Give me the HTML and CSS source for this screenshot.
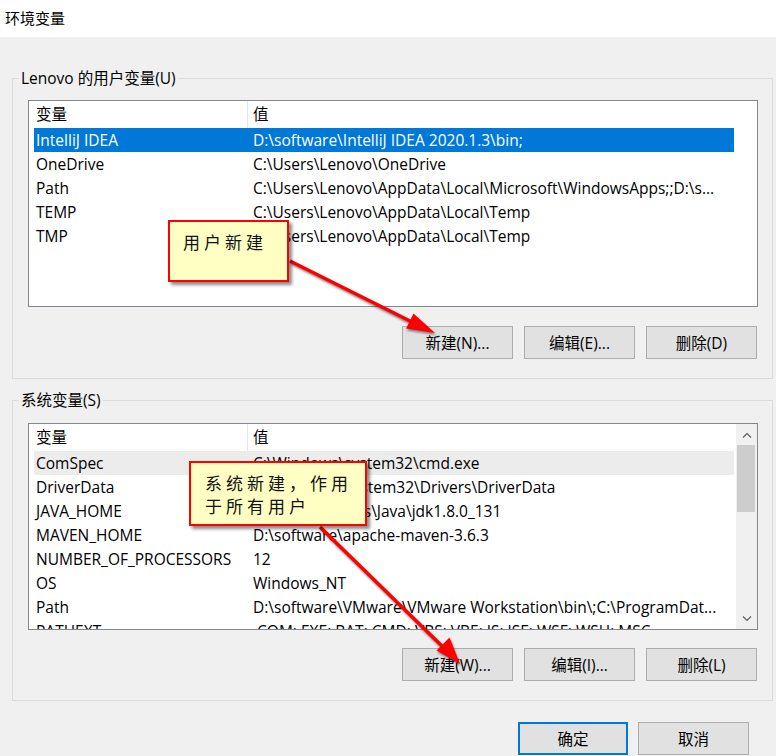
FILE: index.html
```html
<!DOCTYPE html>
<html lang="zh-CN">
<head>
<meta charset="utf-8">
<title>环境变量</title>
<link rel="stylesheet" href="styles.css">
</head>
<body>
<div class="window">
  <div class="titlebar">环境变量</div>

  <fieldset class="group group-user">
    <legend>Lenovo 的用户变量(U)</legend>
    <div class="list">
      <div class="rows">
        <div class="row head"><span class="c1">变量</span><span class="c2">值</span></div>
        <div class="row sel"><span class="c1">IntelliJ IDEA</span><span class="c2">D:\software\IntelliJ IDEA 2020.1.3\bin;</span></div>
        <div class="row"><span class="c1">OneDrive</span><span class="c2">C:\Users\Lenovo\OneDrive</span></div>
        <div class="row"><span class="c1">Path</span><span class="c2">C:\Users\Lenovo\AppData\Local\Microsoft\WindowsApps;;D:\s...</span></div>
        <div class="row"><span class="c1">TEMP</span><span class="c2">C:\Users\Lenovo\AppData\Local\Temp</span></div>
        <div class="row"><span class="c1">TMP</span><span class="c2">C:\Users\Lenovo\AppData\Local\Temp</span></div>
      </div>
    </div>
    <div class="btns">
      <button class="btn">新建(N)...</button>
      <button class="btn">编辑(E)...</button>
      <button class="btn">删除(D)</button>
    </div>
  </fieldset>

  <fieldset class="group group-sys">
    <legend>系统变量(S)</legend>
    <div class="list">
      <div class="rows">
        <div class="row head"><span class="c1">变量</span><span class="c2">值</span></div>
        <div class="row hl"><span class="c1">ComSpec</span><span class="c2">C:\Windows\system32\cmd.exe</span></div>
        <div class="row"><span class="c1">DriverData</span><span class="c2">C:\Windows\System32\Drivers\DriverData</span></div>
        <div class="row"><span class="c1">JAVA_HOME</span><span class="c2">C:\Program Files\Java\jdk1.8.0_131</span></div>
        <div class="row"><span class="c1">MAVEN_HOME</span><span class="c2">D:\software\apache-maven-3.6.3</span></div>
        <div class="row"><span class="c1">NUMBER_OF_PROCESSORS</span><span class="c2">12</span></div>
        <div class="row"><span class="c1">OS</span><span class="c2">Windows_NT</span></div>
        <div class="row"><span class="c1">Path</span><span class="c2">D:\software\VMware\VMware Workstation\bin\;C:\ProgramDat...</span></div>
        <div class="row"><span class="c1">PATHEXT</span><span class="c2">.COM;.EXE;.BAT;.CMD;.VBS;.VBE;.JS;.JSE;.WSF;.WSH;.MSC</span></div>
      </div>
      <div class="vscroll">
        <div class="sb-btn"><svg width="10" height="6" viewBox="0 0 10 6"><polyline points="1,5.5 5,1.5 9,5.5" fill="none" stroke="#606060" stroke-width="1.2"/></svg></div>
        <div class="sb-thumb"></div>
        <div class="sb-track"></div>
        <div class="sb-btn"><svg width="10" height="6" viewBox="0 0 10 6"><polyline points="1,0.5 5,4.5 9,0.5" fill="none" stroke="#606060" stroke-width="1.2"/></svg></div>
      </div>
    </div>
    <div class="btns">
      <button class="btn">新建(W)...</button>
      <button class="btn">编辑(I)...</button>
      <button class="btn">删除(L)</button>
    </div>
  </fieldset>

  <div class="footer">
    <button class="btn default">确定</button>
    <button class="btn">取消</button>
  </div>

  <svg class="arrows" width="776" height="756" viewBox="0 0 776 756">
    <g class="arrow">
      <line x1="290" y1="261" x2="412" y2="322" stroke="#ff0000" stroke-width="3.5"/>
      <polygon points="435,333 413.5,313.5 406,328.5" fill="#ff0000"/>
      <line x1="320" y1="527" x2="444" y2="648" stroke="#ff0000" stroke-width="3.5"/>
      <polygon points="460,664 449.5,637.5 436.5,650.5" fill="#ff0000"/>
    </g>
  </svg>

  <div class="callout callout-user">用户新建</div>
  <div class="callout callout-sys">系统新建，作用<br>于所有用户</div>
</div>
</body>
</html>
```
FILE: styles.css
```css
html, body {
  margin: 0;
  padding: 0;
}
body {
  background: #f0f0f0;
  font-family: "Open Sans", "Noto Sans CJK SC", sans-serif;
  font-size: 15.5px;
  color: #000;
}
.window {
  position: relative;
  width: 776px;
  height: 756px;
  overflow: hidden;
  background: #f0f0f0;
}
.titlebar {
  height: 37px;
  line-height: 36px;
  background: #fff;
  padding-left: 5px;
  font-family: "Noto Sans CJK SC", sans-serif;
  font-size: 15px;
}
.group {
  border: 1px solid #dcdcdc;
  margin: 0 3px 0 12px;
  padding: 12px 14px 19px 15px;
  min-width: 0;
}
.group-user {
  margin-top: 31px;
}
.group-sys {
  margin-top: 11px;
  padding-top: 13px;
}
.group legend {
  margin-left: -9px;
  padding: 0 2px;
  line-height: 20px;
  height: 20px;
}
.list {
  box-sizing: border-box;
  width: 730px;
  height: 207px;
  border: 1px solid #828790;
  background: #fff;
  display: flex;
  overflow: hidden;
}
.rows {
  padding-left: 5px;
  width: 700px;
  flex: none;
}
.row {
  display: grid;
  grid-template-columns: 214px 1fr;
  height: 24px;
  line-height: 24px;
  white-space: nowrap;
  overflow: hidden;
}
.row .c1 {
  padding-left: 2px;
  overflow: hidden;
}
.row .c2 {
  padding-left: 5px;
  overflow: hidden;
}
.row.head {
  height: 27px;
  line-height: 26px;
}
.row.head .c1 {
  border-right: 1px solid #e5e5e5;
}
.row.sel {
  background: #0078d7;
  color: #fff;
}
.row.hl {
  background: #ececec;
}
.vscroll {
  margin-left: auto;
  width: 21px;
  display: flex;
  flex-direction: column;
  background: #f0f0f0;
}
.sb-btn {
  height: 21px;
  display: flex;
  align-items: center;
  justify-content: center;
}
.sb-thumb {
  height: 67px;
  margin: 0 2px 0 1px;
  background: #cdcdcd;
}
.sb-track {
  flex: 1;
}
.btns {
  display: flex;
  justify-content: flex-end;
  gap: 11px;
  margin-top: 19px;
  margin-right: 1px;
}
.group-sys .btns {
  margin-top: 18px;
}
.btn {
  box-sizing: border-box;
  width: 111px;
  height: 33px;
  background: #e1e1e1;
  border: 1px solid #adadad;
  font-family: "Open Sans", "Noto Sans CJK SC", sans-serif;
  font-size: 15.5px;
  color: #000;
  padding: 0;
  margin: 0;
}
.btn.default {
  border: 2px solid #0078d7;
  width: 110px;
}
.footer {
  display: flex;
  justify-content: flex-end;
  gap: 10px;
  margin-top: 21px;
  padding-right: 27px;
}
.arrows {
  position: absolute;
  left: 0;
  top: 0;
  pointer-events: none;
}
.arrow {
  filter: drop-shadow(1px 2px 1px rgba(0, 0, 0, 0.45));
}
.callout {
  position: absolute;
  box-sizing: border-box;
  background: #ffffc4;
  border: 2px solid #ff0000;
  box-shadow: 3px 3px 3px rgba(0, 0, 0, 0.45);
  font-family: "Noto Sans CJK SC", sans-serif;
  font-size: 17px;
  letter-spacing: 4px;
  color: #111;
}
.callout-user {
  left: 168px;
  top: 220px;
  width: 121px;
  height: 62px;
  padding: 8px 0 0 13px;
  line-height: 24px;
}
.callout-sys {
  left: 189px;
  top: 461px;
  width: 178px;
  height: 65px;
  padding: 8px 0 0 14px;
  line-height: 23px;
}
```
